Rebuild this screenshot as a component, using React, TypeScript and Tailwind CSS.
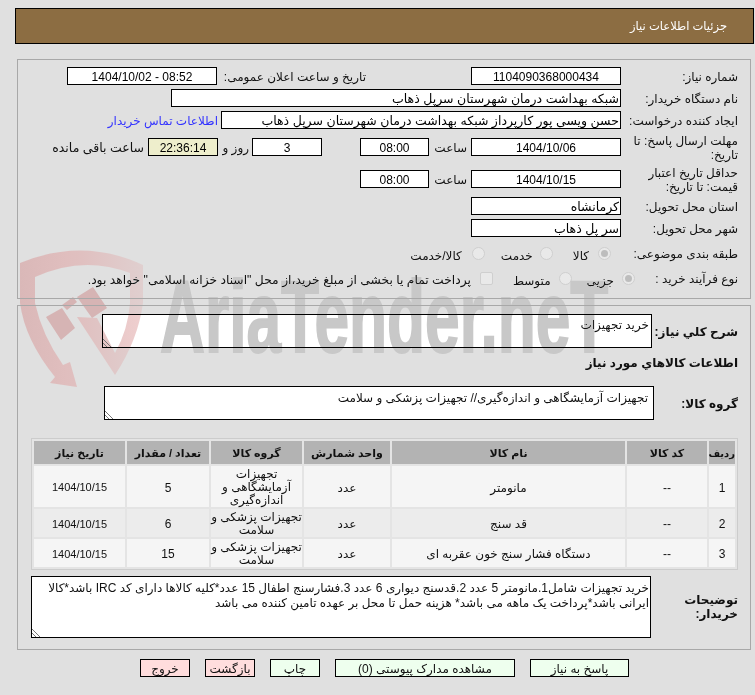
const font = { fontFamily: '"Liberation Sans", "DejaVu Sans", sans-serif' };

const rows = [
  { id: 1, name: 'مانومتر', group: 'تجهیزات آزمایشگاهی و اندازه‌گیری', qty: 5, h: 'h-[41px]', bg: 'bg-[#f5f5f5]' },
  { id: 2, name: 'قد سنج', group: 'تجهیزات پزشکی و سلامت', qty: 6, h: 'h-[28px]', bg: 'bg-[#ececec]' },
  { id: 3, name: 'دستگاه فشار سنج خون عقربه ای', group: 'تجهیزات پزشکی و سلامت', qty: 15, h: 'h-[28px]', bg: 'bg-[#f5f5f5]' },
];

function Box({ className, children }: { className: string; children?: React.ReactNode }) {
  return <div className={`h-[18px] shrink-0 border border-black bg-white leading-[18px] text-black ${className}`}>{children}</div>;
}

function Radio({ checked }: { checked?: boolean }) {
  return (
    <span className="flex h-[13px] w-[13px] shrink-0 items-center justify-center rounded-full border border-[#cfcfcf] bg-[#e9e9e9]">
      {checked && <span className="h-[7px] w-[7px] rounded-full bg-[#bdbdbd]" />}
    </span>
  );
}

function Label({ children, className = 'w-[117px]' }: { children: React.ReactNode; className?: string }) {
  return <div className={`shrink-0 pt-[2px] text-[12px] leading-[14px] text-[#111] ${className}`}>{children}</div>;
}

function Grip() {
  return (
    <svg width="9" height="9" viewBox="0 0 9 9" className="absolute bottom-0 left-0">
      <path d="M0 1 L8 9 M0 5 L4 9" stroke="#777" strokeWidth="1" />
    </svg>
  );
}

// sits over the page: darken keeps black text and borders on top of it
function Watermark() {
  return (
    <div dir="ltr" className="pointer-events-none absolute inset-0 z-20 mix-blend-darken">
      <svg width="130" height="140" viewBox="0 0 130 140" className="absolute left-[20px] top-[250px]">
        <defs>
          <linearGradient id="band" x1="0" x2="1" y1="0" y2="0">
            <stop offset="0" stopColor="#dab8b8" />
            <stop offset="0.5" stopColor="#e2c0c0" />
            <stop offset="1" stopColor="#efcfcf" />
          </linearGradient>
        </defs>
        <path
          d="M0 13 Q63 -13 123 15 L123 53 Q118 90 95 125 L57 67 L77 68 L95 103 Q108 80 110 53 L110 23 Q63 5 15 27 L15 53 Q22 85 43 115 L50 112 L57 137 L30 133 L35 127 Q5 90 0 53 Z"
          fill="url(#band)"
        />
        <path d="M26 67 L42 58 L55 78 L41 90 Z M57 47 L73 37 L87 58 L72 68 Z M42 55 L53 47 L57 52 L47 60 Z" fill="#d6b4b4" />
      </svg>
      <span
        className="absolute left-[160px] top-[266px] origin-left scale-x-[0.61] whitespace-nowrap text-[102px] font-bold leading-none text-[#c8c8c8] [-webkit-text-stroke:2px_#c8c8c8]"
        style={{ fontFamily: '"Liberation Sans", sans-serif' }}
      >
        AriaTender.neT
      </span>
    </div>
  );
}

export default function App() {
  return (
    <div dir="rtl" className="relative isolate h-[695px] w-[755px] overflow-hidden bg-[#e0e0e0] text-[#111]" style={font}>
      <div className="relative z-10 flex flex-col pl-[15px] pr-[1px] pt-[8px]">
        <div className="flex h-[36px] items-center border border-black bg-[#8c6d42] pr-[26px] pt-[2px] text-[11.5px] text-white">جزئیات اطلاعات نیاز</div>

        <section className="ml-[2px] mr-[3px] mt-[15px] h-[240px] border border-[#a8a8a8] pr-[12px] pt-[7px]">
          <div className="flex flex-col">
            <div className="flex h-[18px] items-center">
              <Label>شماره نیاز:</Label>
              <Box className="w-[150px] text-center text-[12px]">1104090368000434</Box>
              <div className="mr-[105px] w-[145px] pt-[2px] text-[12px]">تاریخ و ساعت اعلان عمومی:</div>
              <Box className="mr-[4px] w-[150px] text-center text-[12px]"><span dir="ltr">1404/10/02 - 08:52</span></Box>
            </div>
            <div className="mt-[4px] flex h-[18px] items-center">
              <Label>نام دستگاه خریدار:</Label>
              <Box className="w-[450px] px-[1px] text-[12.5px]">شبکه بهداشت درمان شهرستان سرپل ذهاب</Box>
            </div>
            <div className="mt-[4px] flex h-[18px] items-center">
              <Label>ایجاد کننده درخواست:</Label>
              <Box className="w-[400px] px-[1px] text-[12.5px]">حسن ویسی پور کارپرداز شبکه بهداشت درمان شهرستان سرپل ذهاب</Box>
              <a className="mr-[3px] whitespace-nowrap pt-[2px] text-[12px] text-[#3333ff]">اطلاعات تماس خریدار</a>
            </div>
            <div className="mt-[9px] flex h-[18px] items-center">
              <Label>مهلت ارسال پاسخ: تا تاریخ:</Label>
              <Box className="w-[150px] text-center text-[12px]">1404/10/06</Box>
              <div className="mr-[4px] w-[33px] pt-[2px] text-[12px]">ساعت</div>
              <Box className="mr-[5px] w-[69px] text-center text-[12px]">08:00</Box>
              <Box className="mr-[38px] w-[70px] text-center text-[12px]">3</Box>
              <div className="mr-[3px] w-[26px] whitespace-nowrap pt-[2px] text-[12px]">روز و</div>
              <Box className="mr-[5px] w-[70px] !bg-[#eeeecc] text-center text-[12px]">22:36:14</Box>
              <div className="mr-[4px] whitespace-nowrap pt-[2px] text-[12.5px]">ساعت باقی مانده</div>
            </div>
            <div className="mt-[14px] flex h-[18px] items-center">
              <Label>حداقل تاریخ اعتبار قیمت: تا تاریخ:</Label>
              <Box className="w-[150px] text-center text-[12px]">1404/10/15</Box>
              <div className="mr-[4px] w-[33px] pt-[2px] text-[12px]">ساعت</div>
              <Box className="mr-[5px] w-[69px] text-center text-[12px]">08:00</Box>
            </div>
            <div className="mt-[9px] flex h-[18px] items-center">
              <Label>استان محل تحویل:</Label>
              <Box className="w-[150px] px-[1px] text-[12.5px]">کرمانشاه</Box>
            </div>
            <div className="mt-[4px] flex h-[18px] items-center">
              <Label>شهر محل تحویل:</Label>
              <Box className="w-[150px] px-[1px] text-[12.5px]">سر پل ذهاب</Box>
            </div>
            <div className="mt-[7px] flex h-[18px] items-center text-[12px]">
              <Label>طبقه بندی موضوعی:</Label>
              <div className="mr-[10px] flex items-center gap-[9px]"><Radio checked /><span className="pt-[5px]">کالا</span></div>
              <div className="mr-[20px] flex items-center gap-[7px]"><Radio /><span className="pt-[5px]">خدمت</span></div>
              <div className="mr-[16px] flex items-center gap-[10px]"><Radio /><span className="pt-[5px]">کالا/خدمت</span></div>
            </div>
            <div className="mt-[7px] flex h-[18px] items-center text-[12px]">
              <Label className="w-[103px]">نوع فرآیند خرید :</Label>
              <div className="flex items-center gap-[8px]"><Radio checked /><span className="pt-[5px]">جزیی</span></div>
              <div className="mr-[15px] flex items-center gap-[8px]"><Radio /><span className="pt-[5px]">متوسط</span></div>
              <div className="mr-[20px] flex items-center gap-[9px]">
                <span className="h-[13px] w-[13px] shrink-0 rounded-[2px] border border-[#cfcfcf] bg-[#e9e9e9]" />
                <span className="whitespace-nowrap pt-[5px] text-[12.3px]">پرداخت تمام یا بخشی از مبلغ خرید،از محل "اسناد خزانه اسلامی" خواهد بود.</span>
              </div>
            </div>
          </div>
        </section>

        <section className="ml-[2px] mr-[3px] mt-[6px] h-[345px] border border-[#a8a8a8] pr-[12px] pt-[8px]">
          <div className="flex items-start">
            <div className="mt-[11px] w-[86px] shrink-0 whitespace-nowrap text-[12px] font-bold leading-[14px] text-[#111]">شرح کلي نیاز:</div>
            <div className="relative h-[34px] w-[550px] border border-black bg-white pr-[2px] pt-[3px] text-[12px] leading-[14px]">
              خرید تجهیزات
              <Grip />
            </div>
          </div>
          <div className="mt-[8px] text-[12px] font-bold leading-[14px] text-[#111]">اطلاعات کالاهاي مورد نیاز</div>
          <div className="mt-[16px] flex items-start">
            <div className="mt-[11px] w-[84px] shrink-0 text-[12px] font-bold leading-[14px] text-[#111]">گروه کالا:</div>
            <div className="relative h-[34px] w-[550px] border border-black bg-white px-[5px] text-[12px] leading-[22px]">
              تجهیزات آزمایشگاهی و اندازه‌گیری// تجهیزات پزشکی و سلامت
              <Grip />
            </div>
          </div>
          <div className="ml-[13px] mt-[18px] border border-[#cccccc] bg-[#e4e4e4]">
            <table className="w-full table-fixed border-separate border-spacing-[2px] text-center text-[12px]">
              <thead>
                <tr className="h-[23px] bg-[#b3b3b3] text-[11px] font-bold text-[#111]">
                  <th className="w-[26px] pt-[2px] text-[10px] font-bold">ردیف</th>
                  <th className="w-[80px] pt-[2px] font-bold">کد کالا</th>
                  <th className="w-[233px] pt-[2px] font-bold">نام کالا</th>
                  <th className="w-[86px] pt-[2px] font-bold">واحد شمارش</th>
                  <th className="w-[91px] pt-[2px] font-bold">گروه کالا</th>
                  <th className="w-[82px] pt-[2px] font-bold">تعداد / مقدار</th>
                  <th className="pt-[2px] font-bold">تاریخ نیاز</th>
                </tr>
              </thead>
              <tbody>
                {rows.map((r) => (
                  <tr key={r.id} className={`${r.h} ${r.bg}`}>
                    <td className="pt-[2px]">{r.id}</td>
                    <td className="pt-[2px]">--</td>
                    <td className="pt-[2px]">{r.name}</td>
                    <td className="pt-[2px]">عدد</td>
                    <td className="pt-[2px] leading-[13px]">{r.group}</td>
                    <td className="pt-[2px]">{r.qty}</td>
                    <td className="pt-[2px] text-[11px]">1404/10/15</td>
                  </tr>
                ))}
              </tbody>
            </table>
          </div>
          <div className="mt-[6px] flex items-start">
            <div className="mt-[17px] w-[87px] shrink-0 text-[12px] font-bold leading-[14px] text-[#111]">توضیحات خریدار:</div>
            <div className="relative h-[62px] w-[620px] border border-black bg-white px-[1px] pt-[4px] text-[12px] leading-[15px]">
              خرید تجهیزات شامل1.مانومتر 5 عدد 2.قدسنج دیواری 6 عدد 3.فشارسنج اطفال 15 عدد*کلیه کالاها دارای کد IRC باشد*کالا ایرانی باشد*پرداخت یک ماهه می باشد* هزینه حمل تا محل بر عهده تامین کننده می باشد
              <Grip />
            </div>
          </div>
        </section>

        <div className="mt-[9px] flex items-start justify-center gap-[15px] text-[12px] text-[#111]">
          <button className="h-[18px] w-[99px] border border-black bg-[#eeffee] pt-[2px] leading-[14px]">پاسخ به نیاز</button>
          <button className="h-[18px] w-[180px] border border-black bg-[#eeffee] pt-[2px] leading-[14px]">مشاهده مدارک پیوستی (0)</button>
          <button className="h-[18px] w-[50px] border border-black bg-[#eeffee] pt-[2px] leading-[14px]">چاپ</button>
          <button className="h-[18px] w-[50px] border border-black bg-[#ffdddd] pt-[2px] leading-[14px]">بازگشت</button>
          <button className="h-[18px] w-[50px] border border-black bg-[#ffdddd] pt-[2px] leading-[14px]">خروج</button>
        </div>
      </div>
      <Watermark />
    </div>
  );
}
